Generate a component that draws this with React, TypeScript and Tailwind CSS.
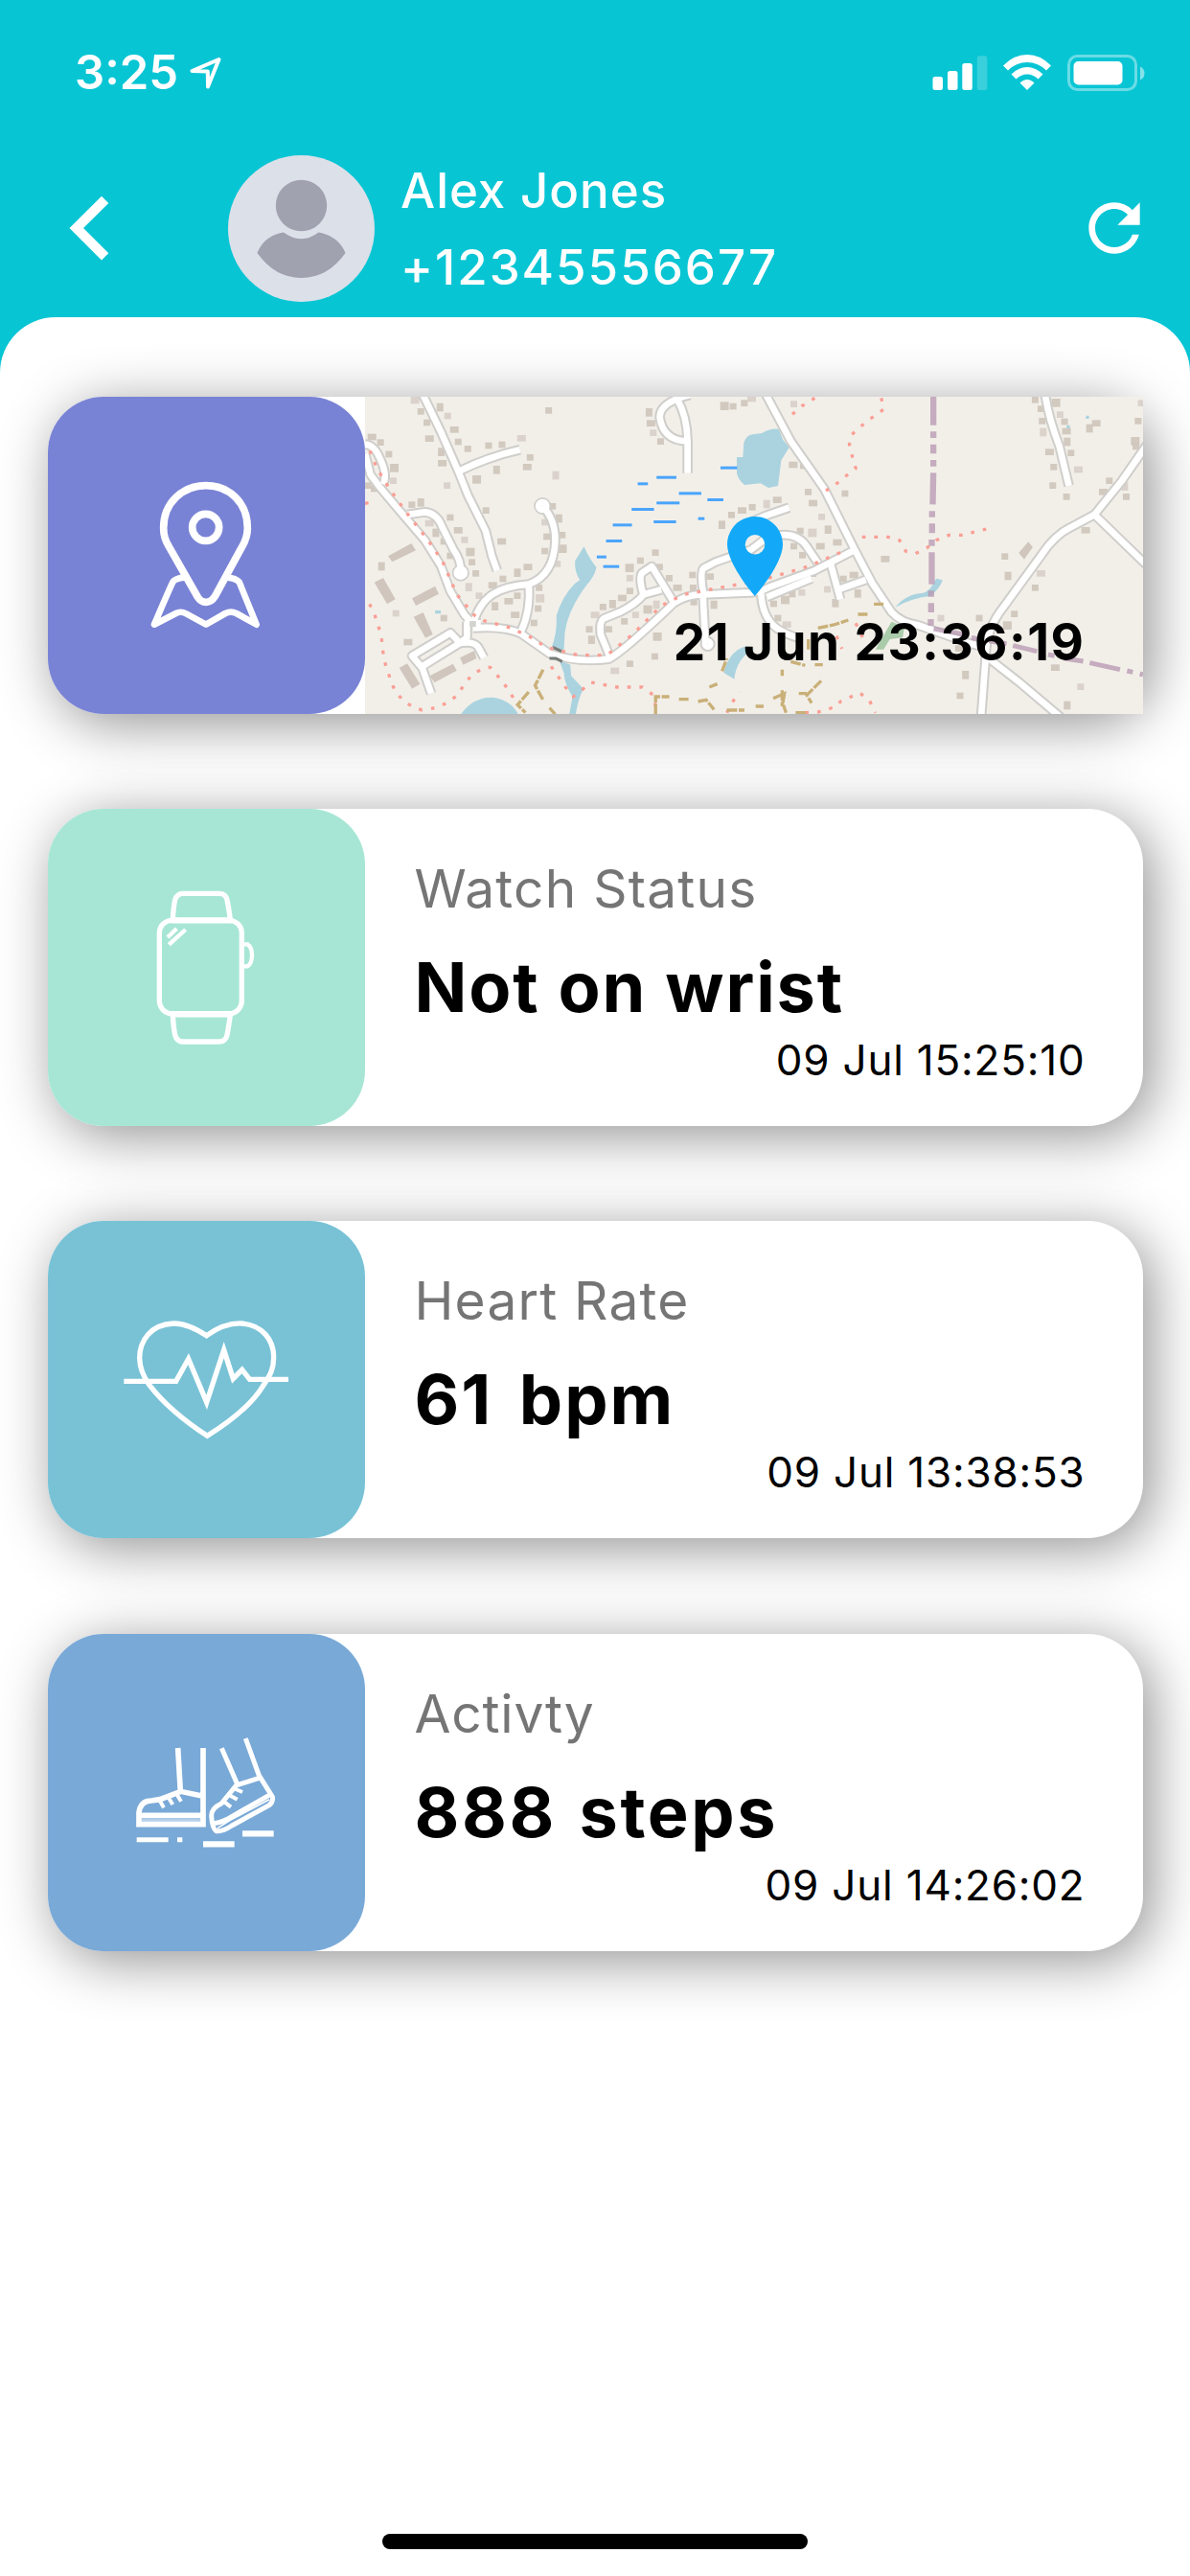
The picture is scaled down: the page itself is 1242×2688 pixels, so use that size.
import type { ReactNode } from 'react';
import { MdRefresh } from 'react-icons/md';
import clsx from 'clsx';

const ROADS = [
  'M33 190 Q62 192 80 235 Q104 285 90 315',
  'M33 220 L50 285 L80 325 L130 385 L220 490 L270 570 L300 650 L345 725 L370 750',
  'M212 30 L270 150 L325 275 L355 350 L410 460 L430 540 L446 585',
  'M325 275 Q420 228 518 207',
  'M165 410 L220 402 Q258 405 275 450 L310 520 Q335 555 332 592',
  'M588 383 Q628 425 628 490 Q625 600 545 628 C450 635 395 665 372 750',
  'M545 628 Q552 710 520 778',
  'M370 765 Q470 758 520 782 L610 845 Q700 875 795 862 Q840 840 1000 686 Q1040 660 1090 660 L1240 654 Q1270 652 1300 636 L1440 585 L1570 518',
  'M800 858 L770 785 Q765 745 780 735 L830 715 Q880 690 905 660 L960 645',
  'M903 658 Q888 605 900 592 L930 572 L1000 686',
  'M345 750 H395 M352 745 V795 L330 812 L212 885 M330 812 L300 780 L180 852 L212 890 L240 970',
  'M330 812 Q380 805 390 830 L405 858',
  'M1050 35 Q955 58 955 105 Q965 178 1040 180 M1010 50 Q1040 100 1042 180 V280',
  'M1285 30 L1365 180 L1470 330 L1565 520 L1620 625 L1680 715 Q1710 748 1760 755 L1930 815 L1975 825',
  'M1092 660 Q1080 590 1092 578 L1130 558 L1240 520 L1290 482 Q1380 455 1415 510 L1450 562',
  'M1090 660 L1098 812',
  'M1272 655 Q1275 730 1320 765 Q1350 785 1385 795',
  'M1200 450 L1290 412 L1360 388',
  'M1290 668 L1430 610',
  'M1490 565 L1505 620 L1520 675 M1512 645 L1600 614',
  'M2160 30 Q2172 110 2205 195 L2235 320',
  'M2480 190 L2400 305 L2315 410 L2240 450 Q2190 475 2150 535 L2030 700 Q1975 770 1975 850 L1960 1050',
  'M2315 410 L2480 570',
  'M1978 855 L2080 935 L2210 1045',
];

const FOOTPATHS = [
  'M48 210 L70 265 L110 330 L160 400 L230 490 L275 555 L320 660 L375 725 L405 742 L480 762 L545 790 L600 825 L700 850 L790 850 L870 785 L960 695 L1030 660 L1180 632 L1290 610 L1420 572 L1540 520',
  'M33 375 L70 368',
  'M47 690 Q70 730 85 800 Q90 870 108 912 Q130 1000 212 1022 Q310 1010 340 945 Q380 890 425 888 Q480 950 500 990',
  'M615 885 L660 950 L685 980 L710 960 L740 935 L820 950 H900 L935 975 L942 1010',
  'M1165 1030 L1180 1000 L1205 965',
  'M1440 45 L1400 70 L1365 100',
  'M1648 45 L1656 80 L1600 120 L1555 160 L1548 190 L1558 230 L1568 265 L1530 295 L1500 320 L1475 335',
  'M1588 480 H1670 L1705 490 L1725 525 L1755 532 L1790 515 L1820 490 L1860 474 H1900 L1990 452',
  'M1410 1030 L1450 1028 L1510 1010 L1520 995 L1580 968 L1610 990 L1630 1030',
  'M1508 790 L1525 830 M1568 750 L1590 795',
];

const TRACKS = [
  'M590 895 L565 945 L590 990 M545 965 L510 1005 L535 1030 M610 1015 L628 1035',
  'M942 1035 V980 H985 M1015 988 H1045 M1075 995 L1100 990 L1125 1020 M1165 1022 H1220 M1255 1010 H1280 M1150 900 L1165 860 M1110 950 L1135 940',
  'M1450 765 L1500 755 L1545 740 M1575 722 H1605 M1625 690 H1655 M1338 895 V915 M1310 985 L1345 970 L1340 1000 L1350 1030 M1338 960 V1010 M1365 870 L1410 882 M1440 880 H1465 M1460 930 L1415 975 L1430 1000 M1390 970 H1415 M1420 800 V835 M1380 1030 H1415',
];

// Centres of the small houses along the streets
const HOUSES = [
  [187, 48], [208, 88], [227, 123], [232, 173], [268, 72], [292, 102], [310, 145], [325, 183], [272, 212], [272, 250], [290, 320],
  [355, 205], [380, 298], [420, 195], [462, 192], [520, 172], [445, 268], [550, 232], [538, 262], [608, 85], [630, 285],
  [52, 168], [82, 185], [108, 222], [122, 262], [122, 305], [43, 320], [62, 330], [208, 370], [180, 380], [232, 438],
  [300, 420], [255, 465], [322, 460], [280, 495], [345, 490], [360, 525], [368, 560], [380, 595], [300, 540], [358, 635],
  [412, 398], [458, 495], [620, 385], [640, 420], [596, 435], [650, 475], [602, 480], [648, 515], [596, 525], [635, 565],
  [540, 575], [510, 590], [465, 612], [430, 632], [390, 665], [440, 695], [480, 682], [510, 665], [578, 640], [578, 670],
  [575, 705], [562, 750], [500, 725], [85, 570], [130, 720], [165, 810], [280, 735],
  [922, 88], [925, 125], [935, 155], [958, 182], [1155, 68], [1185, 72], [1220, 62], [1240, 48],
  [1150, 440], [1180, 412], [1210, 398], [1245, 388], [1290, 375], [1320, 365],
  [942, 530], [895, 555], [858, 575], [862, 610], [862, 650], [835, 672], [808, 688], [778, 700], [750, 725], [735, 770],
  [742, 800], [790, 770], [845, 745], [880, 725], [915, 705], [955, 575], [985, 610], [1008, 640], [945, 690], [1058, 600],
  [1108, 605], [1060, 640], [1125, 690], [812, 900], [862, 878], [940, 855], [945, 790], [1062, 685],
  [1375, 65], [1370, 255], [1405, 252], [1420, 340], [1432, 375], [1462, 418], [1482, 455], [1508, 498], [1535, 345], [1395, 462],
  [1430, 465], [1375, 510], [1402, 538], [1455, 510], [1435, 590], [1480, 645], [1560, 600], [1530, 612], [1505, 685], [1658, 550],
  [1400, 655], [1370, 660], [1345, 675], [1312, 690], [1325, 735], [1350, 755], [1575, 655],
  [2130, 52], [2148, 80], [2152, 118], [2155, 150], [2172, 215], [2188, 262], [2185, 320], [2192, 58], [2208, 98], [2222, 120],
  [2225, 150], [2230, 180], [2242, 218], [2262, 270], [2228, 355], [2300, 138], [2318, 125], [2452, 118], [2462, 62], [2440, 178],
  [2445, 198], [2362, 305], [2340, 340], [2410, 320], [2415, 355], [2285, 460], [2035, 542], [2045, 600], [2145, 595], [2130, 640],
  [2065, 722], [2040, 755], [1955, 735], [1835, 735], [1890, 830], [1912, 910], [1895, 978], [2190, 890], [2272, 950], [2230, 1005],
];

const BLOCKS = [
  'M105 540 L178 500 L192 522 L118 558 Z',
  'M62 622 L90 608 L128 675 L102 690 Z',
  'M180 672 L252 634 L264 658 L192 695 Z',
  'M185 730 L215 716 L245 785 L222 796 Z',
  'M140 890 L165 876 L205 940 L180 955 Z',
  'M235 915 L308 877 L320 898 L250 936 Z',
  'M330 858 L375 836 L382 860 L340 880 Z',
  'M2078 530 L2108 495 L2122 512 L2095 550 Z',
];

const MARSH = [
  [945, 294, 62], [886, 314, 32], [1145, 264, 52], [1015, 344, 70], [945, 374, 72], [867, 394, 70], [1104, 364, 50],
  [936, 433, 70], [1075, 423, 20], [808, 443, 60], [787, 493, 50], [758, 543, 30], [778, 573, 50],
];

function StreetMap() {
  return (
    <svg viewBox="33 41 2434 993" preserveAspectRatio="none" className="block h-full w-full" fill="none">
      <rect x="33" y="41" width="2434" height="993" fill="#f2efe9" />
      {/* Water */}
      <g fill="#aad3df">
        <path d="M1196 230 H1215 L1218 185 Q1225 160 1250 158 L1275 155 Q1300 138 1328 142 L1340 175 L1360 200 L1335 240 L1325 320 L1295 326 L1270 312 L1220 317 Q1200 300 1196 280 Z" />
        <path d="M718 510 Q735 550 757 575 Q750 605 728 628 L712 650 Q665 720 658 780 L655 835 L615 830 Q635 780 632 725 Q650 665 690 625 L705 615 Q688 590 690 555 Z" />
        <path d="M640 865 L675 880 L678 915 L716 955 Q700 985 692 1035 H672 L682 980 Q655 935 655 905 Z" />
        <path d="M333 1035 Q370 982 432 982 Q490 990 512 1035 Z" />
        <path d="M1155 905 Q1175 830 1230 822 L1250 830 Q1195 860 1188 925 Z" />
        <path d="M1692 700 Q1725 658 1780 655 Q1800 650 1820 610 L1840 615 Q1830 645 1800 665 Q1740 672 1692 700 Z" />
        <path d="M252 710 h18 v10 h-18 Z M2288 100 h10 v10 h-10 Z M2228 130 h10 v12 h-10 Z" />
      </g>
      <path d="M1630 832 L1680 745 L1720 762 L1715 795 L1675 800 L1655 832 Z" fill="#a9cba9" />
      <g fill="#4aa5fb">
        {MARSH.map(([x, y, w]) => (
          <rect key={`${x}-${y}`} x={x} y={y - 5} width={w} height="9" />
        ))}
      </g>
      <g fill="#d0c6bd">
        {BLOCKS.map(d => <path key={d} d={d} />)}
        {HOUSES.map(([x, y], i) => (
          <rect
            key={i}
            x={x - 11}
            y={y - 11}
            width={i % 3 === 0 ? 27 : 21}
            height={i % 4 === 0 ? 26 : 20}
            opacity={i % 5 === 0 ? 0.7 : 0.95}
          />
        ))}
      </g>
      {/* Streets: grey casing first, white surface on top */}
      <g stroke="#cfcecb" strokeWidth="32" strokeLinejoin="round">
        {ROADS.map(d => <path key={d} d={d} />)}
        <circle cx="332" cy="592" r="11" />
        <circle cx="588" cy="383" r="11" />
        <circle cx="1105" cy="815" r="8" />
      </g>
      <g stroke="#fff" strokeWidth="20" strokeLinejoin="round">
        {ROADS.map(d => <path key={d} d={d} />)}
        <circle cx="332" cy="592" r="12" />
        <circle cx="588" cy="383" r="12" />
        <circle cx="1105" cy="815" r="8" />
      </g>
      <rect x="360" y="743" width="20" height="18" fill="#d4d3d0" />
      <path d="M610 860 H630 L650 870 M620 825 L648 838" stroke="#777c78" strokeWidth="9" />
      <g stroke="#fa9f95" strokeWidth="10" strokeDasharray="11 27">
        {FOOTPATHS.map(d => <path key={d} d={d} />)}
      </g>
      <g stroke="#c9b078" strokeWidth="10" strokeDasharray="32 5">
        {TRACKS.map(d => <path key={d} d={d} />)}
      </g>
      {/* Administrative boundary */}
      <g stroke="#b596b0" strokeOpacity="0.75" strokeWidth="19">
        <path d="M1811 41 V130 M1811 150 V170 M1811 190 V219 M1811 239 V259 M1811 279 L1809 378 M1807 399 V418 M1807 438 V468 M1806 488 V508 M1806 528 V628 M1804 648 V667 M1804 687 V716 M1803 737 V757" />
        <path strokeWidth="15" d="M1812 767 L1905 785 M1930 795 L1955 800 M1985 805 L2040 814 M2060 820 L2135 838 M2170 848 L2190 852 M2220 860 L2280 869 M2300 874 L2395 895 M2417 899 L2435 903 M2457 908 L2467 911" />
      </g>
    </svg>
  );
}

function PinMapIcon() {
  return (
    <g strokeWidth="23" strokeLinejoin="round" strokeLinecap="round">
      <path d="M391 453 C391 373 452 320 524 320 C596 320 654 373 654 453 C654 482 645 499 635 515 L552 667 Q541 685 524 685 Q508 685 498 669 L408 511 Q391 485 391 453 Z" />
      <circle cx="523" cy="451" r="42" />
      <path d="M455 608 Q427 611 420 622 Q400 665 362 755 L430 720 Q445 712 462 721 L524 755 L585 720 Q602 712 619 720 L682 755 L628 622 Q616 610 592 608" strokeWidth="20" />
    </g>
  );
}

function WatchIcon() {
  return (
    <g strokeWidth="16">
      <rect x="378" y="391" width="258" height="292" rx="40" />
      <path d="M420 388 Q422 350 427 327 Q433 307 452 307 H566 Q586 308 590 327 Q595 350 600 388" />
      <path d="M420 687 Q422 725 427 750 Q433 771 452 771 H566 Q586 770 590 750 Q595 725 600 687" />
      <path d="M415 391 H605 M415 685 H605" strokeWidth="19" />
      <path d="M640 466 H654 Q668 475 668 500 Q668 525 654 535 H640" strokeWidth="13" />
      <path d="M404 444 L432 417 M408 467 L460 420" strokeWidth="13" />
    </g>
  );
}

function HeartIcon() {
  return (
    <g strokeWidth="16" strokeLinejoin="miter">
      <path d="M526 401 C490 378 455 362 422 363 C352 366 316 416 316 472 C317 510 331 534 347 556 C390 612 452 665 528 715 C600 670 671 612 704 556 C726 525 736 504 736 468 C736 416 702 368 636 363 C592 361 558 378 526 401 Z" />
      <path d="M267 544 H430 L469 474 L526 610 L580 446 L609 536 L637 508 L661 538 H782" />
    </g>
  );
}

function ShoesIcon() {
  return (
    <g strokeWidth="17">
      <path d="M436 399 L444 535 M515 399 V638 H314 V602 Q318 565 352 564 L380 560 L445 535 L515 550 M314 610 H515" />
      <path d="M322 627 H515" strokeWidth="13" strokeOpacity="0.45" />
      <path d="M378 562 L392 586 M405 552 L420 576 M432 543 L446 566" strokeWidth="12" />
      <path d="M573 400 L622 512 L572 573 Q540 588 541 612 Q543 650 556 659 Q575 662 605 642 L722 578 Q735 568 732 552 L690 485 L648 369 M622 515 L690 493 M546 635 Q565 635 590 622 L725 545" strokeWidth="15" />
      <path d="M560 650 L600 625 L722 560" strokeWidth="5" />
      <path d="M610 525 L638 537 M595 545 L622 560 M578 565 L602 584" strokeWidth="12" />
      <path d="M307 686 H406 M434 686 H450" strokeWidth="15" />
      <path d="M515 700 H613 M638 667 H736" strokeWidth="19" />
    </g>
  );
}

function Tile({ color, children }: { color: string; children: ReactNode }) {
  return (
    <div className={clsx('size-[331px] shrink-0 rounded-[58px]', color)}>
      <svg viewBox="29 42 993 993" className="size-full" fill="none" stroke="#fff">{children}</svg>
    </div>
  );
}

const CARD = 'flex h-[331px] rounded-[58px] bg-white shadow-[9px_10px_58px_rgba(0,0,0,0.43)]';

interface StatCardProps {
  label: string;
  value: string;
  time: string;
  color: string;
  icon: ReactNode;
  labelSpacing: string;
  valueSpacing: string;
}

function StatCard({ label, value, time, color, icon, labelSpacing, valueSpacing }: StatCardProps) {
  return (
    <section className={CARD}>
      <Tile color={color}>{icon}</Tile>
      <div className="flex flex-1 flex-col pt-[51px] pr-[60px] pl-[52px] whitespace-nowrap">
        <p className={clsx('text-[55px] leading-[64px] text-[#757575]', labelSpacing)}>{label}</p>
        <p className={clsx('mt-[31px] text-[72px] leading-[80px] font-bold text-black', valueSpacing)}>{value}</p>
        <p className="mt-[10px] text-right text-[44px] leading-[52px] tracking-[0.8px] text-black">{time}</p>
      </div>
    </section>
  );
}

function StatusBar() {
  return (
    <div className="flex h-[142px] items-start justify-between pt-[51px] pr-[46px] pl-[78px]">
      <div className="flex items-start">
        <span className="text-[49px] leading-[50px] font-semibold">3:25</span>
        <svg width="38" height="42" viewBox="195 55 38 42" className="mt-[4px] ml-[9px]" fill="none" stroke="#fff" strokeWidth="4" strokeLinejoin="round">
          <path d="M228.5 62 L200.5 74 L216.8 74.5 L217 90.5 Z" />
        </svg>
      </div>
      <svg width="224" height="42" viewBox="972 55 224 42" className="mt-[4px]" fill="#fff">
        <rect x="973.5" y="80" width="10.5" height="14" rx="2.5" />
        <rect x="989" y="74" width="10.5" height="20" rx="2.5" />
        <rect x="1004.3" y="66" width="10.5" height="28" rx="2.5" />
        <rect x="1019.8" y="58.3" width="10.5" height="35.7" rx="2.5" fillOpacity="0.2" />
        <path d="M1047 68.5 Q1058 57 1072 57 Q1086 57 1097 68.5 L1092 73.5 Q1083.5 65 1072 65 Q1060.5 65 1052 73.5 Z" />
        <path d="M1055.5 77.5 Q1063 70 1072 70 Q1081 70 1088.5 77.5 L1083.5 82.5 Q1078 77.5 1072 77.5 Q1066 77.5 1060.5 82.5 Z" />
        <path d="M1064.5 86.5 Q1068 83 1072 83 Q1076 83 1079.5 86.5 L1072 94 Z" />
        <rect x="1115.5" y="58.5" width="70" height="35" rx="9" fill="none" stroke="#fff" strokeOpacity="0.4" strokeWidth="3" />
        <rect x="1120.5" y="64" width="51" height="24.5" rx="5" />
        <path d="M1190 69.5 Q1194.5 71.5 1194.5 76.5 Q1194.5 81.5 1190 83.5 Z" fillOpacity="0.5" />
      </svg>
    </div>
  );
}

function ContactHeader() {
  return (
    <header className="flex h-[189px] items-start pt-[20px] pr-[39px] pl-[72px]">
      <svg width="42" height="68" viewBox="72 204 42 68" className="mt-[42px]" fill="#fff">
        <path d="M72.5 238 L106 204.8 L113.3 212 L87 238 L113.3 264.2 L106 271.5 Z" />
      </svg>
      <svg viewBox="0 0 153 153" className="ml-[124px] size-[153px]">
        <circle cx="76.5" cy="76.5" r="76.5" fill="#dce0e9" />
        <circle cx="76.5" cy="52.5" r="26.7" fill="#a0a2af" />
        <path d="M58 80.5 Q76.5 94 94.5 80.5 C109 83 118 91 122.5 102 Q104 128 76.5 128 Q49 128 30.5 102 C35 91 43 83 58 80.5 Z" fill="#a0a2af" />
      </svg>
      <div className="ml-[27px] flex-1 text-[51px] leading-[79.5px] font-medium">
        <p className="-mt-[3px] tracking-[1px]">Alex Jones</p>
        <p className="tracking-[2px]">+12345556677</p>
      </div>
      <MdRefresh className="mt-[36px] size-[80px]" />
    </header>
  );
}

export default function App() {
  return (
    <div className="flex h-[2688px] w-[1242px] flex-col overflow-hidden bg-[#08c5d4] font-['Inter','Liberation_Sans',sans-serif] text-white">
      <StatusBar />
      <ContactHeader />
      <main className="flex flex-1 flex-col rounded-t-[58px] bg-white px-[49.5px] pt-[82.7px]">
        <div className="flex flex-col gap-[99.4px]">
          <section className={CARD}>
            <Tile color="bg-[#7983d5]"><PinMapIcon /></Tile>
            <div className="relative min-w-0 flex-1">
              <StreetMap />
              <svg viewBox="0 0 58 83" className="absolute top-[125px] left-[378px] h-[83px] w-[58px]">
                <path fillRule="evenodd" fill="#13a9f8" d="M29 0 C13 0 0 13 0 29 C0 50 29 83 29 83 C29 83 58 50 58 29 C58 13 45 0 29 0 Z M29 19 a10.3 10.3 0 1 1 0 20.6 a10.3 10.3 0 1 1 0 -20.6 Z" />
              </svg>
              <p className="absolute right-[60px] bottom-[43px] text-[53px] leading-[64px] font-bold tracking-[1.5px] whitespace-nowrap text-black">21 Jun 23:36:19</p>
            </div>
          </section>
          <StatCard
            label="Watch Status"
            value="Not on wrist"
            time="09 Jul 15:25:10"
            color="bg-[#a7e6d5]"
            icon={<WatchIcon />}
            labelSpacing="tracking-[1.25px]"
            valueSpacing="tracking-[1.9px]"
          />
          <StatCard
            label="Heart Rate"
            value="61 bpm"
            time="09 Jul 13:38:53"
            color="bg-[#79c2d6]"
            icon={<HeartIcon />}
            labelSpacing="tracking-[1.2px]"
            valueSpacing="tracking-[2.1px] [word-spacing:8px]"
          />
          <StatCard
            label="Activty"
            value="888 steps"
            time="09 Jul 14:26:02"
            color="bg-[#79a9d7]"
            icon={<ShoesIcon />}
            labelSpacing="tracking-[0.8px]"
            valueSpacing="tracking-[2.6px] [word-spacing:4px]"
          />
        </div>
        <div className="mt-auto mb-[28px] h-[16px] w-[444px] self-center rounded-full bg-black" />
      </main>
    </div>
  );
}
